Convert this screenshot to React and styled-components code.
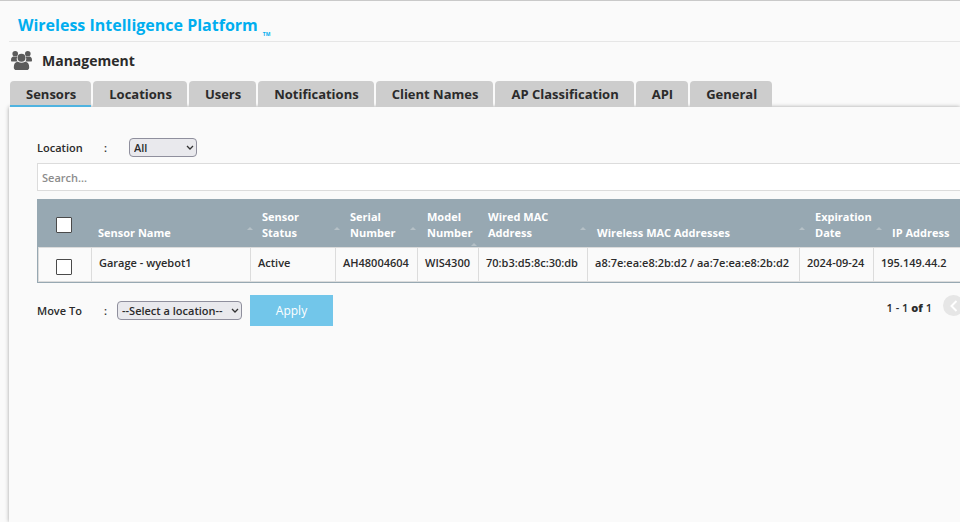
import React from 'react';
import styled, { createGlobalStyle } from 'styled-components';

const GlobalStyle = createGlobalStyle`
  * { box-sizing: border-box; }
  html { overflow: hidden; }
  body {
    margin: 0;
    background: #fafafa;
    color: #2b2b2b;
    font: 600 11px/16px "Open Sans", "Noto Sans", sans-serif;
  }
  button, input, select { font: inherit; color: inherit; }
`;

const Page = styled.div`
  display: flex;
  flex-direction: column;
  min-height: 100vh;
  padding-left: 9px;
  border-top: 1px solid #c9c9c9;
  overflow: hidden;
`;

const Brand = styled.header`
  display: flex;
  align-items: flex-end;
  gap: 5px;
  height: 41px;
  padding: 0 0 4px 9px;
  border-bottom: 1px solid #e6e6e6;
  color: #00aeef;
`;

const BrandName = styled.span`
  font-size: 16px;
  font-weight: 700;
  line-height: 24px;
`;

const Trademark = styled.span`
  font-size: 5px;
  line-height: 6px;
  font-weight: 700;
`;

const Heading = styled.div`
  display: flex;
  align-items: center;
  gap: 10px;
  height: 39px;
  padding: 0 0 2px 2px;
`;

const Title = styled.h1`
  margin: 0;
  font-size: 14px;
  font-weight: 700;
  line-height: 20px;
`;

const Tabs = styled.nav`
  position: relative;
  z-index: 1;
  display: flex;
  gap: 2px;
  padding-left: 1px;
`;

const Tab = styled.button`
  height: 26px;
  padding: 1px 15px 0 16px;
  border: 0;
  border-bottom: 2px solid ${(p) => (p.$active ? '#4fb3e0' : '#cdcdcd')};
  border-radius: 4px 4px 0 0;
  background: #cdcdcd;
  font-size: 13px;
  font-weight: 700;
  line-height: 24px;
  white-space: nowrap;
`;

const Panel = styled.main`
  flex: 1;
  padding: 31px 0 0 28px;
  background: #fafafa;
  box-shadow: 0 0 4px rgba(0, 0, 0, 0.35);
`;

const Field = styled.div`
  display: flex;
  align-items: center;
  height: ${(p) => p.$height}px;
`;

const Label = styled.label`
  display: flex;
  width: ${(p) => p.$width}px;
`;

const LabelText = styled.span`
  width: 67px;
`;

const SelectBox = styled.span`
  position: relative;
  display: flex;
  width: ${(p) => p.$width}px;
`;

const Select = styled.select`
  appearance: none;
  width: 100%;
  height: 19px;
  padding: 0 4px;
  border: 1px solid #8f8f9d;
  border-radius: 4px;
  background: #e9e9ed;
  line-height: 16px;
`;

const Chevron = styled.svg`
  position: absolute;
  right: 3px;
  top: 7px;
  pointer-events: none;
`;

const Search = styled.input`
  display: block;
  width: 100%;
  height: 28px;
  margin: 6px 0 8px;
  padding: 0 4px;
  border: 1px solid #dcdcdc;
  border-right: 0;
  background: #fff;
  &::placeholder { color: #8c8c8c; opacity: 1; }
`;

const Table = styled.table`
  width: 100%;
  table-layout: fixed;
  border-collapse: separate;
  border-spacing: 0;
  border-left: 1px solid #97a8b2;
  border-bottom: 1px solid #97a8b2;
`;

const Col = styled.col`
  width: ${(p) => (p.$width ? `${p.$width}px` : 'auto')};
`;

const Th = styled.th`
  position: relative;
  height: 48px;
  padding: 0 0 6px ${(p) => p.$inset}px;
  background: #97a8b2;
  color: #fff;
  font-weight: 700;
  text-align: left;
  vertical-align: bottom;
  white-space: pre-line;
`;

const SortArrow = styled.span`
  position: absolute;
  z-index: 1;
  right: ${(p) => p.$right}px;
  bottom: ${(p) => (p.$low ? 1 : 17)}px;
  border: 3px solid transparent;
  border-top: 0;
  border-bottom-color: #b5c0c6;
`;

const Td = styled.td`
  height: 35px;
  padding: 0 0 3px 7px;
  border: solid #dcdcdc;
  border-width: ${(p) => (p.$first ? '1px 1px 1px 1px' : '1px 1px 1px 0')};
  white-space: nowrap;
  &:last-child { border-right: 0; }
`;

const CheckCell = styled.span`
  display: flex;
  align-items: center;
  padding: ${(p) => p.$padding};
`;

const Checkbox = styled.input`
  appearance: none;
  width: 16px;
  height: 16px;
  margin: 0;
  border: 1px solid #4a4a4a;
  border-radius: 1px;
  background: #fff;
  &:checked { background: #4badd9; }
`;

const Footer = styled.div`
  display: flex;
  justify-content: space-between;
  align-items: flex-start;
  padding-top: 12px;
`;

const Apply = styled.button`
  width: 83px;
  height: 31px;
  margin-left: 8px;
  padding: 0;
  border: 0;
  background: #72c6ea;
  color: #fff;
  font-size: 12px;
  font-weight: 400;
`;

const Pager = styled.div`
  display: flex;
  align-items: center;
  gap: 11px;
  margin-right: -4px;
`;

const PageCount = styled.span`
  padding-top: 4px;
`;

const PageButton = styled.button`
  display: flex;
  align-items: center;
  justify-content: center;
  width: 21px;
  height: 21px;
  padding: 0;
  border: 0;
  border-radius: 50%;
  background: #e6e6e6;
`;

const tabs = ['Sensors', 'Locations', 'Users', 'Notifications', 'Client Names', 'AP Classification', 'API', 'General'];

const columns = [
  { title: 'Sensor Name', value: 'Garage - wyebot1', width: 159, inset: 6, arrow: -2 },
  { title: 'Sensor\nStatus', value: 'Active', width: 85, inset: 11, arrow: -4 },
  { title: 'Serial\nNumber', value: 'AH48004604', width: 82, inset: 14, arrow: 2 },
  { title: 'Model\nNumber', value: 'WIS4300', width: 61, inset: 9, arrow: 2, low: true },
  { title: 'Wired MAC\nAddress', value: '70:b3:d5:8c:30:db', width: 109, inset: 9, arrow: 2 },
  { title: 'Wireless MAC Addresses', value: 'a8:7e:ea:e8:2b:d2 / aa:7e:ea:e8:2b:d2', width: 212, inset: 9, arrow: -5 },
  { title: 'Expiration\nDate', value: '2024-09-24', width: 74, inset: 15, arrow: -8 },
  { title: 'IP Address', value: '195.149.44.2', inset: 18 },
];

function PeopleIcon() {
  return (
    <svg width="21" height="20" viewBox="0 0 21 20" fill="#5b5b5b" aria-hidden="true">
      <circle cx="4.2" cy="2.8" r="2.8" />
      <circle cx="16.8" cy="2.8" r="2.8" />
      <path d="M0 9.2C0 6.6 1.1 5.7 2.8 5.5c.9.7 2 .7 2.800.1l.6.5C5.400 7.700 5.600 9.200 6.600 10.500H1C.3 10.500 0 9.900 0 9.200z" />
      <path d="M21 9.200c0-2.600-1.100-3.500-2.800-3.700-.9.700-2 .7-2.800.1l-.6.5c.8 1.600.6 3.100-.4 4.400H20c.7 0 1-.6 1-1.300z" />
      <circle cx="10.500" cy="6.800" r="4" />
      <path d="M2.800 16.200c0-3.200 1.300-5.100 4.100-5.400 2.200 1.300 5 1.300 7.200 0 2.800.3 4.100 2.200 4.100 5.400 0 1.900-.9 2.800-2.600 2.800H5.400c-1.700 0-2.600-.9-2.600-2.800z" />
    </svg>
  );
}

function Dropdown({ id, width, option }) {
  return (
    <SelectBox $width={width}>
      <Select id={id}>
        <option>{option}</option>
      </Select>
      <Chevron width="8" height="6" viewBox="0 0 8 6" fill="none" stroke="#333" strokeWidth="1.3" aria-hidden="true">
        <path d="M1 1l3 3 3-3" />
      </Chevron>
    </SelectBox>
  );
}

export default function App() {
  return (
    <>
      <GlobalStyle />
      <Page>
        <Brand>
          <BrandName>Wireless Intelligence Platform</BrandName>
          <Trademark>TM</Trademark>
        </Brand>
        <Heading>
          <PeopleIcon />
          <Title>Management</Title>
        </Heading>
        <Tabs>
          {tabs.map((name, i) => (
            <Tab key={name} type="button" $active={i === 0}>{name}</Tab>
          ))}
        </Tabs>
        <Panel>
          <Field $height={19}>
            <Label htmlFor="location" $width={92}><LabelText>Location</LabelText>:</Label>
            <Dropdown id="location" width={68} option="All" />
          </Field>
          <Search type="text" placeholder="Search..." aria-label="Search" />
          <Table>
            <colgroup>
              <Col $width={54} />
              {columns.map((c) => <Col key={c.title} $width={c.width} />)}
            </colgroup>
            <thead>
              <tr>
                <Th $inset={0}>
                  <CheckCell $padding="0 0 8px 18px"><Checkbox type="checkbox" aria-label="Select all sensors" /></CheckCell>
                </Th>
                {columns.map((c) => (
                  <Th key={c.title} $inset={c.inset}>
                    {c.title}
                    {c.arrow !== undefined && <SortArrow $right={c.arrow} $low={c.low} />}
                  </Th>
                ))}
              </tr>
            </thead>
            <tbody>
              <tr>
                <Td $first>
                  <CheckCell $padding="8px 0 0 10px"><Checkbox type="checkbox" aria-label="Select Garage - wyebot1" /></CheckCell>
                </Td>
                {columns.map((c) => <Td key={c.title}>{c.value}</Td>)}
              </tr>
            </tbody>
          </Table>
          <Footer>
            <Field $height={31}>
              <Label htmlFor="move-to" $width={80}><LabelText>Move To</LabelText>:</Label>
              <Dropdown id="move-to" width={125} option="--Select a location--" />
              <Apply type="button">Apply</Apply>
            </Field>
            <Pager>
              <PageCount>1 - 1 <b>of</b> 1</PageCount>
              <PageButton type="button" aria-label="Previous page">
                <svg width="8" height="12" viewBox="0 0 8 12" fill="none" stroke="#fff" strokeWidth="2" aria-hidden="true">
                  <path d="M6.5 1L1.5 6l5 5" />
                </svg>
              </PageButton>
            </Pager>
          </Footer>
        </Panel>
      </Page>
    </>
  );
}
